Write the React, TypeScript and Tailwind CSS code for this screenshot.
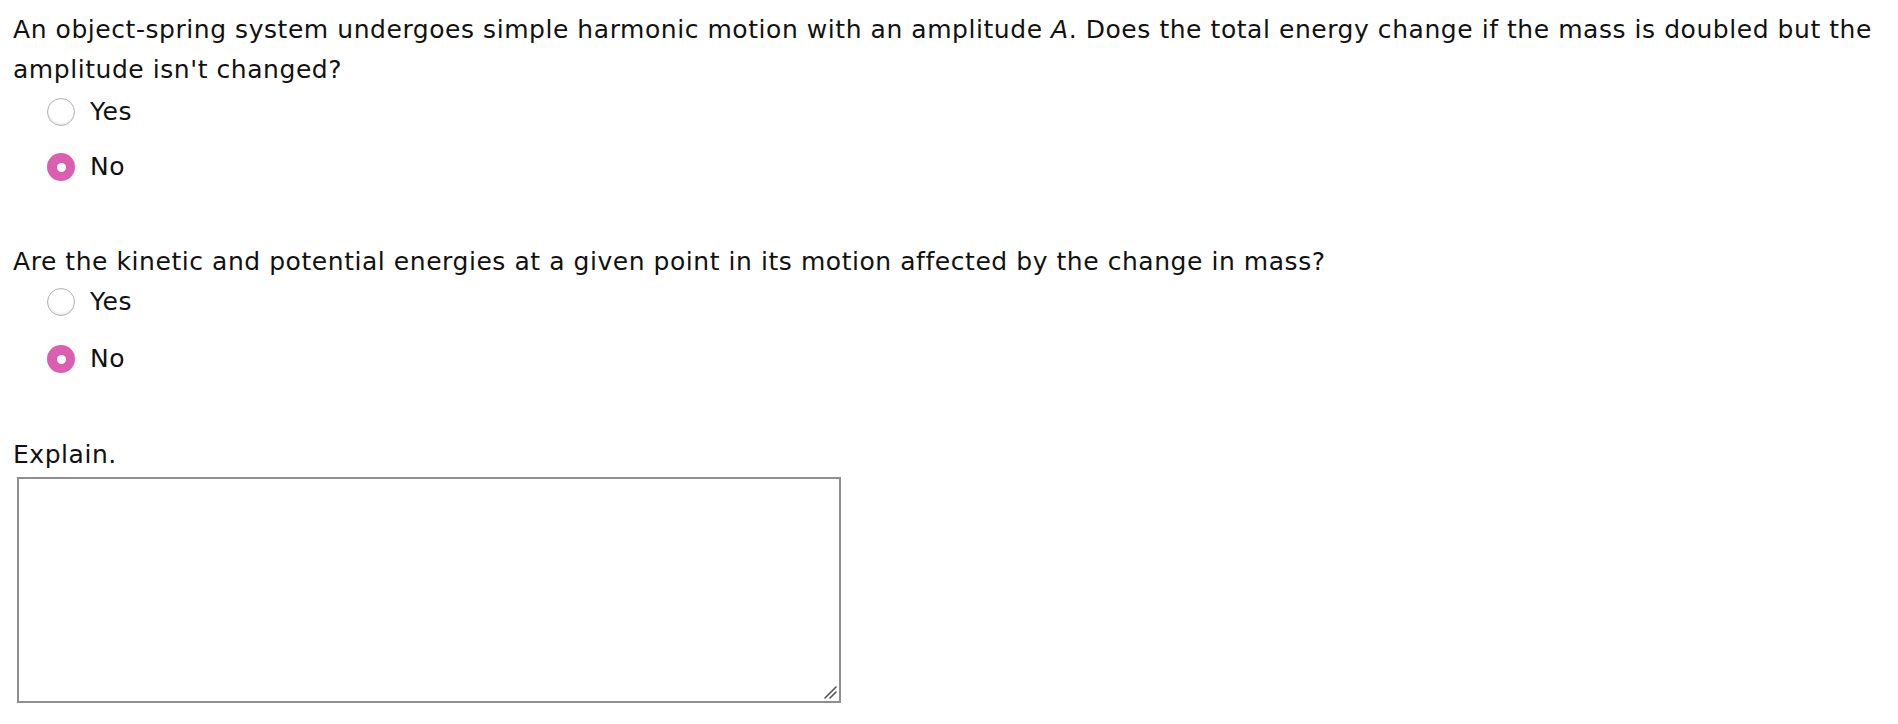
import React from 'react';

const Radio = ({ checked }: { checked?: boolean }) =>
  checked ? (
    <span className="w-[28px] h-[28px] rounded-full bg-[#db5eb1] flex items-center justify-center shrink-0">
      <span className="w-[9px] h-[9px] rounded-full bg-white" />
    </span>
  ) : (
    <span className="w-[28px] h-[28px] rounded-full border-[1.5px] border-[#b0b0b0] bg-white shadow-[inset_0_-2px_2px_rgba(0,0,0,0.07)] shrink-0" />
  );

const Option = ({ label, checked }: { label: string; checked?: boolean }) => (
  <label className="flex items-center h-[40px] pl-[34px]">
    <Radio checked={checked} />
    <span className="ml-[15px] leading-[40px]">{label}</span>
  </label>
);

export default function App() {
  return (
    <div
      className="bg-white text-[#111] w-[1898px] h-[724px] pl-[13px] pt-[10px] text-[25px] tracking-[0.55px] leading-[40px]"
      style={{ fontFamily: '"DejaVu Sans", Verdana, sans-serif' }}
    >
      {/* Question 1 */}
      <p>
        An object-spring system undergoes simple harmonic motion with an amplitude <i>A</i>. Does the total energy
        change if the mass is doubled but the amplitude isn't changed?
      </p>
      <div className="flex flex-col gap-[15px] mt-[2px]">
        <Option label="Yes" />
        <Option label="No" checked />
      </div>

      {/* Question 2 */}
      <p className="mt-[55px]">
        Are the kinetic and potential energies at a given point in its motion affected by the change in mass?
      </p>
      <div className="flex flex-col gap-[17px]">
        <Option label="Yes" />
        <Option label="No" checked />
      </div>

      {/* Explain */}
      <p className="mt-[56px]">Explain.</p>
      <div className="relative mt-[2px] ml-[4px] w-[824px] h-[226px]">
        <textarea className="block w-full h-full border-2 border-[#8e8e8e] bg-white outline-none resize-none" />
        <svg className="absolute right-[4px] bottom-[4px]" width="14" height="14" viewBox="0 0 14 14">
          <path d="M2 13 L13 2 M7 13 L13 7" stroke="#555" strokeWidth="1.6" strokeLinecap="round" />
        </svg>
      </div>
    </div>
  );
}
